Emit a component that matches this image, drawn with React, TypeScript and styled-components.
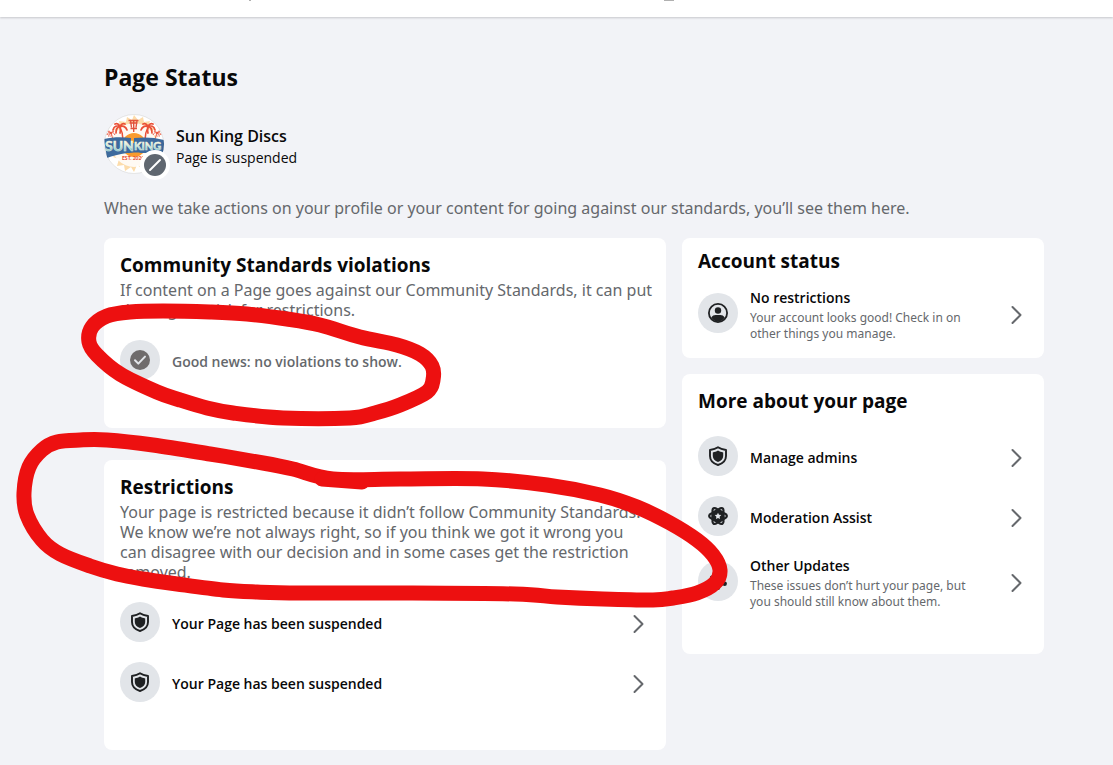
import React from "react";
import styled, { createGlobalStyle } from "styled-components";

const GlobalStyle = createGlobalStyle`
  * { box-sizing: border-box; }
  body {
    margin: 0;
    background: #f2f3f7;
    color: #080809;
    font-family: "Open Sans", "Noto Sans", sans-serif;
    overflow-x: hidden;
  }
  h1, h2, p { margin: 0; }
`;

const Page = styled.div`
  position: relative;
`;

const TopBar = styled.header`
  height: 17px;
  background: #fff;
  box-shadow: 0 1px 2px rgba(0, 0, 0, 0.18);
  svg { display: block; margin-left: 249px; }
`;

const Main = styled.main`
  padding: 46px 69px 16px 104px;
`;

const PageTitle = styled.h1`
  font-size: 23px;
  line-height: 28px;
  font-weight: 700;
`;

const Profile = styled.div`
  display: flex;
  align-items: center;
  gap: 12px;
  margin-top: 23px;
`;

const AvatarFrame = styled.div`
  position: relative;
  width: 60px;
  height: 60px;
  svg { display: block; }
`;

const Badge = styled.span`
  position: absolute;
  right: -6px;
  bottom: -6px;
  width: 30px;
  height: 30px;
  border-radius: 50%;
  background: #fff;
  padding: 4px;
`;

const ProfileText = styled.div`
  padding-top: 6px;
`;

const ProfileName = styled.p`
  font-size: 16px;
  line-height: 22px;
  font-weight: 600;
`;

const ProfileState = styled.p`
  font-size: 14px;
  line-height: 22px;
`;

const BodyText = styled.p`
  font-family: "Noto Sans", "Open Sans", sans-serif;
  font-size: 16px;
  line-height: 20px;
  color: #65686c;
`;

const Intro = styled(BodyText)`
  margin: 24px 0 20px;
`;

const Columns = styled.div`
  display: grid;
  grid-template-columns: 562fr 362fr;
  gap: 16px;
  align-items: start;
`;

const Column = styled.div<{ $gap: number }>`
  display: flex;
  flex-direction: column;
  gap: ${(p) => p.$gap}px;
`;

const Card = styled.section<{ $top?: number; $bottom: number }>`
  padding: ${(p) => p.$top ?? 16}px 16px ${(p) => p.$bottom}px;
  border-radius: 8px;
  background: #fff;
`;

const CardTitle = styled.h2`
  font-size: 19px;
  line-height: 22px;
  font-weight: 700;
`;

const CardText = styled(BodyText)`
  margin: 4px -3px 0 0;
`;

const Rows = styled.div<{ $space: number }>`
  display: flex;
  flex-direction: column;
  gap: 16px;
  margin-top: ${(p) => p.$space}px;
`;

const Row = styled.div`
  display: flex;
  align-items: center;
  gap: 12px;
  width: 100%;
  min-height: 44px;
`;

const RowButton = styled(Row).attrs({ as: "button", type: "button" })`
  border: 0;
  padding: 0;
  background: none;
  color: inherit;
  font: inherit;
  text-align: left;
  cursor: pointer;
`;

const IconDisc = styled.span`
  display: flex;
  flex: none;
  align-items: center;
  justify-content: center;
  width: 40px;
  height: 40px;
  margin-bottom: 4px;
  border-radius: 50%;
  background: #e2e5e9;
`;

const RowText = styled.span`
  display: flex;
  flex: 1;
  flex-direction: column;
  gap: 2px;
  min-width: 0;
`;

const RowTitle = styled.span<{ $muted?: boolean }>`
  font-size: 14px;
  line-height: 20px;
  font-weight: 600;
  color: ${(p) => (p.$muted ? "#65686c" : "#080809")};
`;

const RowNote = styled.span`
  max-width: 228px;
  font-family: "Noto Sans", "Open Sans", sans-serif;
  font-size: 12px;
  line-height: 16px;
  color: #65686c;
`;

const Marker = styled.svg`
  position: absolute;
  top: 0;
  left: 0;
  pointer-events: none;
`;

const Chevron = () => (
  <svg width="24" height="24" viewBox="0 0 24 24" fill="none" stroke="#65686c" strokeWidth="2" strokeLinecap="round" strokeLinejoin="round" aria-hidden="true">
    <path d="M8.500 4 16.500 12 8.500 20" />
  </svg>
);

const ShieldIcon = () => (
  <svg width="20" height="20" viewBox="0 0 20 20" aria-hidden="true">
    <path d="M10 1.300C12.400 3 15 3.600 18 4v6c0 4.500-3.500 7.600-8 9-4.500-1.400-8-4.500-8-9V4c3-.4 5.600-1 8-2.700Z" fill="none" stroke="#1f2123" strokeWidth="1.900" strokeLinejoin="round" />
    <path d="M10 4.600c1.700 1.100 3.300 1.600 5.200 1.800V10c0 3-2.200 5-5.200 6.100C7 15 4.800 13 4.800 10V6.400C6.700 6.200 8.300 5.700 10 4.600Z" fill="#1f2123" />
  </svg>
);

const CheckIcon = () => (
  <svg width="20" height="20" viewBox="0 0 20 20" aria-hidden="true">
    <circle cx="10" cy="10" r="10" fill="#6f6c6c" />
    <path d="m5 10.300 3.300 3.300 6.700-7" fill="none" stroke="#e2e5e9" strokeWidth="2" strokeLinecap="round" strokeLinejoin="round" />
  </svg>
);

const PersonIcon = () => (
  <svg width="20" height="20" viewBox="0 0 20 20" aria-hidden="true">
    <circle cx="10" cy="10" r="9.100" fill="none" stroke="#1f2123" strokeWidth="1.800" />
    <circle cx="10" cy="7.500" r="3.200" fill="#1f2123" />
    <path d="M3.300 14.600C4.200 12.700 6 12 7.600 12h4.800c1.600 0 3.400.7 4.300 2.600A8.600 8.600 0 0 1 10 18.800a8.600 8.600 0 0 1-6.700-4.200Z" fill="#1f2123" />
  </svg>
);

const AtomIcon = () => (
  <svg width="20" height="20" viewBox="0 0 20 20" aria-hidden="true">
    <circle cx="10" cy="10" r="6.800" fill="#1f2123" />
    <g fill="none" stroke="#1f2123" strokeWidth="2.200">
      <ellipse cx="10" cy="10" rx="8.900" ry="3.700" />
      <ellipse cx="10" cy="10" rx="8.900" ry="3.700" transform="rotate(60 10 10)" />
      <ellipse cx="10" cy="10" rx="8.900" ry="3.700" transform="rotate(120 10 10)" />
    </g>
    <path d="m10 6.700 1 2.100 2.300.3-1.700 1.600.4 2.300-2-1.100L8 13l.4-2.300-1.700-1.600 2.300-.3Z" fill="#e2e5e9" />
  </svg>
);

const GearIcon = () => (
  <svg width="20" height="20" viewBox="0 0 20 20" aria-hidden="true">
    <circle cx="10" cy="10" r="4.500" fill="none" stroke="#1f2123" strokeWidth="4" />
    <g fill="#1f2123">
      <circle cx="10" cy="2.800" r="1.900" />
      <circle cx="16.200" cy="6.400" r="1.900" />
      <circle cx="16.700" cy="12.800" r="2.200" />
      <circle cx="10" cy="17" r="2" />
      <circle cx="3.800" cy="13.600" r="1.900" />
      <circle cx="3.800" cy="6.400" r="1.900" />
    </g>
  </svg>
);

const Palm = ({ x, y, flip, size = 1 }: { x: number; y: number; flip?: boolean; size?: number }) => (
  <g transform={`translate(${x} ${y}) scale(${flip ? -size : size} ${size})`} fill="none" stroke="#ea5138" strokeLinecap="round">
    <path d="M0 0c2 4 3 8 3 13" strokeWidth="1.500" />
    <path d="M0 0c-3-2-6-1-7 3M0 0c-3-1-4 3-4 6M0 0c0 2 1 4 0 6M0 0c3-2 6 0 7 3M0 0c-1-3-3-4-5-3M0 0c1-3 3-4 5-3" strokeWidth="1.700" />
  </g>
);

const Logo = () => (
  <svg width="60" height="60" viewBox="0 0 60 60" role="img" aria-label="Sun King Discs">
    <defs>
      <clipPath id="disc"><circle cx="30" cy="30" r="30" /></clipPath>
      <linearGradient id="lettering" x1="0" y1="0" x2="0" y2="1">
        <stop offset="0.300" stopColor="#fff6dc" />
        <stop offset="0.600" stopColor="#b5e0d8" />
        <stop offset="0.850" stopColor="#68b4c4" />
      </linearGradient>
    </defs>
    <g clipPath="url(#disc)">
      <circle cx="30" cy="30" r="30" fill="#fff" />
      <path d="m30 1 4 5 5-3 1 5 6-1-2 6 7 1-4 5 6 4-6 4 5 5-6 3 3 6-6 1 1 7-6-2-2 6-3-2-3 7-3-5-6 4-1-6-7 1 2-7-6-2 4-6-5-4 5-5-6-4 6-4-3-5 6-2-1-6 7 1 1-5 5 3Z" fill="#fcdcab" />
      <circle cx="30" cy="31" r="22" fill="#fff" opacity="0.850" />
      <circle cx="30" cy="31" r="12" fill="#f99b2e" />
      <Palm x={16} y={13} />
      <Palm x={44} y={13} flip />
      <Palm x={7} y={19} size={0.55} />
      <Palm x={53} y={19} flip size={0.55} />
      <path d="M24.500 6.500h10M25.500 9h8M26.500 6.500l1 7M33 6.500l-1 7M29.700 7v11M26.500 14.500h6.500" stroke="#e2533d" strokeWidth="1.400" fill="none" />
      <path d="M0 25c9-2 18-2 27-1v5h3v-5c9-1 20-1 30 2v14c-8-2-16-1-23-1-5-1-9 0-14 0-8 1-15 3-20 5Z" fill="#3d6a9d" />
    </g>
    <circle cx="30" cy="30" r="29.500" fill="none" stroke="#000" strokeOpacity="0.100" />
    <g fontFamily="Lato, sans-serif" fontWeight="700" fill="url(#lettering)" stroke="#e8f3e4" strokeWidth="0.500">
      <text x="1" y="37" fontSize="14">SUN</text>
      <text x="30" y="36" fontSize="11">KING</text>
    </g>
    <text x="18" y="46" fontFamily="Lato, sans-serif" fontWeight="900" fontSize="5" fill="#ea5138">EST. 2020</text>
  </svg>
);

type Point = [number, number];

const upperLoop: Point[] = [
  [130, 312], [163, 311], [210, 312], [247, 314], [287, 319], [320, 325], [360, 337], [397, 345], [420, 354], [432, 366],
  [433, 380], [427, 392], [400, 405], [375, 413], [350, 418], [283, 418], [233, 413], [207, 408], [180, 400], [157, 392],
  [120, 374], [97, 355], [89, 342], [92, 327], [107, 316],
];

const lowerLoop: Point[] = [
  [80, 440], [107, 440], [153, 445], [210, 454], [263, 463], [293, 469], [333, 479], [400, 479], [483, 479], [547, 485],
  [600, 495], [637, 507], [670, 523], [697, 540], [713, 555], [720, 570], [715, 583], [697, 593], [673, 598], [653, 600],
  [603, 599], [557, 597], [515, 594], [400, 593], [300, 593], [257, 592], [223, 590], [177, 584], [143, 579], [117, 574],
  [90, 566], [60, 554], [42, 540], [27, 515], [24, 493], [29, 467], [42, 450], [57, 442],
];

/* Smooth closed curve through the points of a pen stroke. */
const smoothLoop = (points: Point[]) => {
  const at = (i: number) => points[(i + points.length) % points.length];
  const curves = points.map((p, i) => {
    const [before, next, after] = [at(i - 1), at(i + 1), at(i + 2)];
    const c1 = [p[0] + (next[0] - before[0]) / 6, p[1] + (next[1] - before[1]) / 6];
    const c2 = [next[0] - (after[0] - p[0]) / 6, next[1] - (after[1] - p[1]) / 6];
    return `C${c1} ${c2} ${next}`;
  });
  return `M${points[0]} ${curves.join(" ")}Z`;
};

const LinkRow = ({ icon, title, note }: { icon: React.ReactNode; title: string; note?: string }) => (
  <RowButton>
    <IconDisc>{icon}</IconDisc>
    <RowText>
      <RowTitle>{title}</RowTitle>
      {note && <RowNote>{note}</RowNote>}
    </RowText>
    <Chevron />
  </RowButton>
);

export default function App() {
  return (
    <Page>
      <GlobalStyle />
      <TopBar>
        <svg width="430" height="1" aria-hidden="true">
          <path d="M0 .5h2M415 .5h10" stroke="#b0b0b0" />
        </svg>
      </TopBar>
      <Main>
        <PageTitle>Page Status</PageTitle>
        <Profile>
          <AvatarFrame>
            <Logo />
            <Badge>
              <svg width="22" height="22" viewBox="0 0 22 22" aria-hidden="true">
                <circle cx="11" cy="11" r="11" fill="#606770" />
                <path d="M6 16 16 6" stroke="#fff" strokeWidth="2" strokeLinecap="round" />
              </svg>
            </Badge>
          </AvatarFrame>
          <ProfileText>
            <ProfileName>Sun King Discs</ProfileName>
            <ProfileState>Page is suspended</ProfileState>
          </ProfileText>
        </Profile>
        <Intro>When we take actions on your profile or your content for going against our standards, you’ll see them here.</Intro>
        <Columns>
          <Column $gap={32}>
            <Card $bottom={44}>
              <CardTitle>Community Standards violations</CardTitle>
              <CardText>If content on a Page goes against our Community Standards, it can put the Page at risk for restrictions.</CardText>
              <Rows $space={20}>
                <Row>
                  <IconDisc><CheckIcon /></IconDisc>
                  <RowTitle $muted>Good news: no violations to show.</RowTitle>
                </Row>
              </Rows>
            </Card>
            <Card $bottom={44}>
              <CardTitle>Restrictions</CardTitle>
              <CardText>
                Your page is restricted because it didn’t follow Community Standards. We know we’re not always right, so if you think we got it wrong you can disagree with our decision and in some cases get the restriction removed.
              </CardText>
              <Rows $space={20}>
                <LinkRow icon={<ShieldIcon />} title="Your Page has been suspended" />
                <LinkRow icon={<ShieldIcon />} title="Your Page has been suspended" />
              </Rows>
            </Card>
          </Column>
          <Column $gap={16}>
            <Card $top={12} $bottom={16}>
              <CardTitle>Account status</CardTitle>
              <Rows $space={16}>
                <LinkRow icon={<PersonIcon />} title="No restrictions" note="Your account looks good! Check in on other things you manage." />
              </Rows>
            </Card>
            <Card $bottom={44}>
              <CardTitle>More about your page</CardTitle>
              <Rows $space={24}>
                <LinkRow icon={<ShieldIcon />} title="Manage admins" />
                <LinkRow icon={<AtomIcon />} title="Moderation Assist" />
                <LinkRow icon={<GearIcon />} title="Other Updates" note="These issues don’t hurt your page, but you should still know about them." />
              </Rows>
            </Card>
          </Column>
        </Columns>
      </Main>
      <Marker width="740" height="620" viewBox="0 0 740 620" fill="none" stroke="#ed1010" strokeWidth="15" strokeLinecap="round" strokeLinejoin="round" aria-hidden="true">
        <path d={smoothLoop(upperLoop)} />
        <path d={smoothLoop(lowerLoop)} />
        <path d="M322 479 362 482" />
      </Marker>
    </Page>
  );
}
